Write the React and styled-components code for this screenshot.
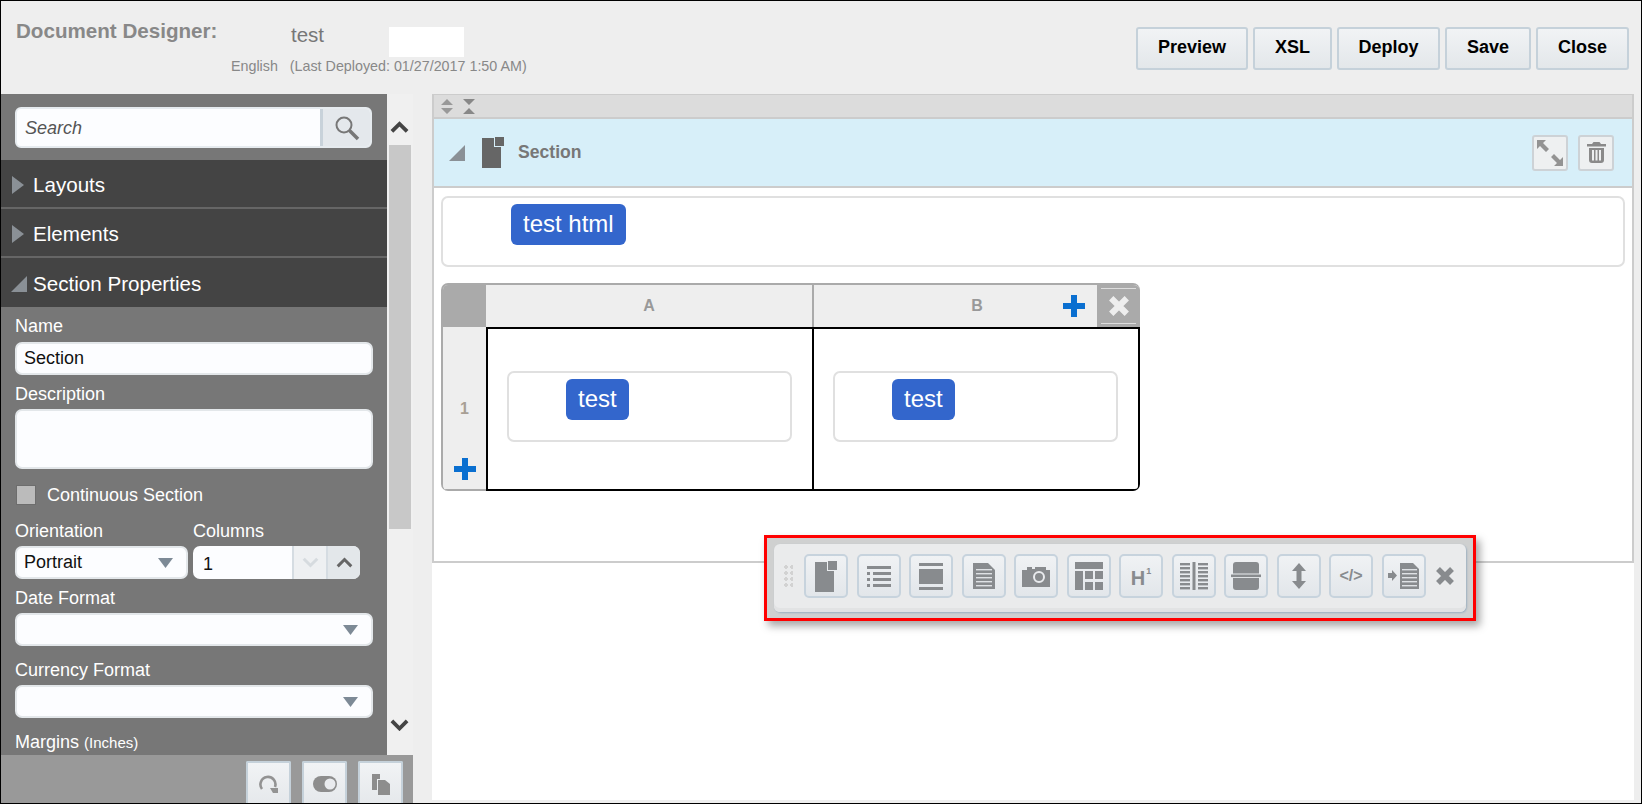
import styled, { createGlobalStyle } from 'styled-components'

const GlobalStyle = createGlobalStyle`
  html, body {
    margin: 0;
    padding: 0;
    background: #fff;
    font-family: "Liberation Sans", Arial, sans-serif;
  }
  * { box-sizing: border-box; }
`

const Frame = styled.div`
  width: 1642px;
  height: 804px;
  border: 1px solid #000;
  display: flex;
  flex-direction: column;
  overflow: hidden;
  background: #fff;
`

/* top header */
const Header = styled.header`
  height: 93px;
  flex: none;
  background: #eee;
  display: flex;
  justify-content: space-between;
  padding: 0 12px 0 15px;
`

const TitleBlock = styled.div`
  display: grid;
  grid-template-columns: 216px 60px 97px 75px;
  grid-template-rows: 55px auto;
  align-items: start;
`

const Title = styled.h1`
  margin: 18px 0 0;
  width: 201px;
  overflow: hidden;
  font-size: 20.6px;
  line-height: 24px;
  font-weight: 700;
  color: #888;
  white-space: nowrap;
`

const DocName = styled.span`
  margin: 22px 0 0 59px;
  font-size: 20.5px;
  line-height: 24px;
  color: #777;
`

const BlankField = styled.div`
  grid-column: 4;
  margin-top: 26px;
  height: 30px;
  background: #fff;
`

const Meta = styled.div`
  grid-column: 1 / -1;
  padding-left: 215px;
  margin-top: 1px;
  font-size: 14.3px;
  line-height: 18px;
  color: #888;
  white-space: pre;
`

const HeaderActions = styled.div`
  display: flex;
  gap: 5px;
  padding-top: 26px;
`

const ActionButton = styled.button`
  height: 43px;
  width: ${({ $w }) => $w}px;
  padding: 0 0 3px;
  border: 2px solid #c5d1da;
  border-radius: 3px;
  background: linear-gradient(#f1f3f5, #e3e7ea);
  font: 700 18px "Liberation Sans", Arial, sans-serif;
  color: #000;
`

const Workspace = styled.div`
  flex: 1;
  min-height: 0;
  display: flex;
`

/* left panel */
const Sidebar = styled.aside`
  width: 412px;
  flex: none;
  display: flex;
  flex-direction: column;
`

const SidebarMain = styled.div`
  flex: 1;
  min-height: 0;
  display: flex;
`

const Panel = styled.div`
  width: 386px;
  flex: none;
  display: flex;
  flex-direction: column;
  background: #777;
  overflow: hidden;
`

const SearchArea = styled.div`
  height: 66px;
  flex: none;
  padding: 13px 15px 0 14px;
  background: #777;
`

const SearchBox = styled.div`
  height: 41px;
  display: flex;
  border-radius: 6px;
  overflow: hidden;
  border: 2px solid #e6ebef;
  background: #fcfdff;
`

const SearchText = styled.span`
  flex: 1;
  padding-left: 8px;
  font-size: 18px;
  line-height: 39px;
  font-style: italic;
  color: #555;
`

const SearchButton = styled.span`
  width: 50px;
  display: flex;
  align-items: center;
  justify-content: center;
  border-left: 3px solid #c8d2da;
  background: #e4e8ec;
`

const AccordionRow = styled.div`
  height: 49px;
  flex: none;
  display: flex;
  align-items: center;
  gap: 6px;
  padding: 3px 0 0 10px;
  background: #444;
  border-bottom: 2px solid #666;
  font-size: 20.6px;
  color: #fff;
  &:nth-of-type(4) { border-bottom: 0; }
`

const Fields = styled.div`
  flex: 1;
  min-height: 0;
  padding: 9px 14px 0;
  overflow: hidden;
`

const FieldLabel = styled.div`
  font-size: 18px;
  line-height: 20px;
  color: #fff;
  margin-top: ${({ $top }) => $top || 0}px;
  margin-bottom: ${({ $gap }) => $gap || 5}px;
  small { font-size: 15px; }
`

const TextBox = styled.div`
  height: ${({ $h }) => $h || 33}px;
  border: 2px solid #e3e7ea;
  border-radius: 7px;
  background: #fcfdff;
  padding: 0 13px 0 7px;
  display: flex;
  align-items: center;
  justify-content: space-between;
  font-size: 18px;
  color: #111;
`

const CheckRow = styled.div`
  display: flex;
  align-items: center;
  gap: 12px;
  margin: 16px 0 0 2px;
  height: 20px;
  font-size: 18px;
  color: #fff;
`

const CheckBox = styled.span`
  width: 18px;
  height: 18px;
  background: #bbb;
  box-shadow: 0 0 0 1px #6d6d6d;
`

const TwoCols = styled.div`
  display: flex;
  gap: 5px;
  margin-top: 16px;
`

const Col = styled.div`
  width: ${({ $w }) => $w}px;
  flex: none;
`

const Spinner = styled.div`
  height: 33px;
  display: flex;
  border-radius: 7px;
  overflow: hidden;
  background: #fcfdff;
  font-size: 18px;
  color: #111;
`

const SpinValue = styled.span`
  width: 99px;
  padding: 3px 0 0 10px;
  line-height: 30px;
`

const SpinButton = styled.span`
  width: 34px;
  display: flex;
  align-items: center;
  justify-content: center;
  background: ${({ $off }) => ($off ? '#eef0f2' : '#e3e7ea')};
  border-left: 2px solid #d5dce2;
`

const ScrollTrack = styled.div`
  flex: 1;
  background: #f0f0f0;
  display: flex;
  flex-direction: column;
  align-items: center;
`

const ScrollArrow = styled.div`
  height: 51px;
  flex: none;
  width: 100%;
  display: flex;
  align-items: center;
  justify-content: center;
  padding: 16px 1px 0 0;
`

const ScrollThumb = styled.div`
  width: 22px;
  height: 384px;
  flex: none;
  background: #c8c8c8;
  margin-right: 1px;
`

const ScrollSpacer = styled.div`
  flex: 1;
`

const ScrollArrowBottom = styled.div`
  height: 50px;
  flex: none;
  display: flex;
  align-items: center;
  padding: 0 1px 10px 0;
`

const SidebarFooter = styled.div`
  height: 48px;
  flex: none;
  background: #999;
  display: flex;
  justify-content: flex-end;
  gap: 11px;
  padding: 6px 10px 0 0;
`

const FooterButton = styled.span`
  width: 45px;
  height: 44px;
  display: flex;
  align-items: center;
  justify-content: center;
  border: 2px solid #c5d1da;
  border-bottom: 0;
  background: linear-gradient(#f1f3f5, #e5e8eb);
  border-radius: 2px 2px 0 0;
`

const Gutter = styled.div`
  width: 19px;
  flex: none;
  background: #eee;
`

/* canvas */
const Canvas = styled.main`
  flex: 1;
  position: relative;
  min-width: 0;
  display: flex;
  flex-direction: column;
  align-items: flex-start;
  background: #fff;
  border-right: 7px solid #eee;
  border-bottom: 3px solid #eee;
`

const SectionFrame = styled.section`
  width: 1202px;
  height: 469px;
  flex: none;
  border: 2px solid #ccc;
  border-top-width: 1px;
  background: #fff;
`

const SectionTools = styled.div`
  height: 24px;
  display: flex;
  align-items: center;
  gap: 10px;
  padding-left: 7px;
  background: #dcdcdc;
  border-bottom: 2px solid #ccc;
`

const SectionBand = styled.div`
  height: 69px;
  display: flex;
  align-items: center;
  padding: 0 18px 0 15px;
  background: #d7eff9;
  border-bottom: 2px solid #ccc;
`

const BandGlyph = styled.span`
  display: flex;
  margin-left: 17px;
`

const SectionName = styled.span`
  flex: 1;
  margin-left: 14px;
  font-size: 17.6px;
  font-weight: 700;
  color: #777;
`

const BandButton = styled.span`
  width: 36px;
  height: 36px;
  margin-left: 10px;
  display: flex;
  align-items: center;
  justify-content: center;
  border: 2px solid #cdd2d6;
  border-radius: 3px;
  background: #eef0f1;
`

const SectionBody = styled.div`
  padding: 8px 7px 0;
`

const DropBox = styled.div`
  height: ${({ $h }) => $h}px;
  border: 2px solid #e0e0e0;
  border-radius: 7px;
  padding: 6px 0 0 ${({ $pad }) => $pad}px;
  background: #fff;
`

const Pill = styled.span`
  display: inline-block;
  height: 41px;
  padding: 0 12px;
  border-radius: 6px;
  background: #36c;
  color: #fff;
  font-size: 24px;
  line-height: 40px;
`

const Grid = styled.div`
  width: 699px;
  height: 208px;
  margin-top: 16px;
  display: grid;
  grid-template-columns: 43px 326px 328px;
  grid-template-rows: 42px 1fr;
  border-radius: 7px;
  overflow: hidden;
  background: #eee;
  border: 2px solid #aaa;
  border-width: 2px 0 0 2px;
`

const CornerCell = styled.div`
  background: #aaa;
`

const ColHead = styled.div`
  position: relative;
  display: flex;
  align-items: center;
  justify-content: center;
  background: #eee;
  border-left: ${({ $split }) => ($split ? '2px solid #aaa' : '0')};
  font-size: 16px;
  font-weight: 700;
  color: #999;
`

const ColTools = styled.div`
  position: absolute;
  top: 0;
  right: 0;
  height: 100%;
  display: flex;
  align-items: center;
  gap: 12px;
`

const RemoveCol = styled.span`
  position: relative;
  width: 43px;
  height: 100%;
  display: flex;
  align-items: center;
  justify-content: center;
  background: #aaa;
  &::before, &::after {
    content: '';
    position: absolute;
    left: 4px;
    right: 4px;
    height: 1px;
    background: #ddd;
  }
  &::before { top: 3px; }
  &::after { bottom: 3px; }
`

const RowHead = styled.div`
  display: flex;
  flex-direction: column;
  align-items: center;
  padding-top: 73px;
  gap: 40px;
  border-bottom: 2px solid #aaa;
  font-size: 16px;
  font-weight: 700;
  color: #a89f95;
  background: #eee;
`

const GridCell = styled.div`
  background: #fff;
  border: 2px solid #000;
  border-right-width: ${({ $first }) => ($first ? 0 : 2)}px;
  border-radius: ${({ $first }) => ($first ? '0' : '0 0 5px 0')};
  padding: 42px ${({ $first }) => ($first ? '20px 0 19px' : '20px 0 19px')};
`

/* floating palette */
const RedMark = styled.div`
  position: absolute;
  left: 332px;
  top: 441px;
  width: 712px;
  height: 86px;
  border: 3px solid #f00;
  padding: 6px 7px;
  background: #cfd0d0;
  box-shadow: 4px 5px 8px rgba(0, 0, 0, 0.35);
`

const Palette = styled.div`
  height: 68px;
  display: flex;
  align-items: center;
  padding: 0 0 4px 9px;
  border-radius: 6px;
  background: #eaebec;
  box-shadow: 1px 1px 2px #9db0c0, inset 0 -4px 0 #e2e3e4;
`

const DragDots = styled.span`
  width: 10px;
  height: 24px;
  margin-right: 11px;
  flex: none;
  background-image: radial-gradient(circle, #d2d2d2 1.7px, transparent 1.8px);
  background-size: 6px 6px;
`

const PaletteItems = styled.div`
  display: flex;
  align-items: center;
  gap: 8.5px;
`

const PaletteButton = styled.span`
  width: 44px;
  height: 44px;
  display: flex;
  align-items: center;
  justify-content: center;
  border: 2px solid #c7d3dd;
  border-radius: 5px;
  background: linear-gradient(#f0f2f4, #e2e6ea);
  color: #888b8e;
  font-weight: 700;
  sup { font-size: 9px; margin-left: 1px; vertical-align: 11px; line-height: 0; }
`

const HeadingGlyph = styled.span`
  font-size: 20px;
  margin-top: 4px;
`

const CodeGlyph = styled.span`
  font-size: 16px;
`

const PaletteClose = styled.span`
  margin-left: 10px;
  display: flex;
`

/* drawings */
const Tri = ({ open, color = '#8a9096' }) => (
  <svg width="16" height="18" viewBox="0 0 16 18">
    {open
      ? <path d="M0 17 L16 1 V17 Z" fill={color} />
      : <path d="M1 0 L13 9 L1 18 Z" fill={color} />}
  </svg>
)

const Caret = () => (
  <svg width="15" height="10" viewBox="0 0 15 10">
    <path d="M0 0 H15 L7.5 10 Z" fill="#7d8a96" />
  </svg>
)

const Chev = ({ up, color = '#444', w = 17, sw = 3.5 }) => (
  <svg width={w} height={w * 0.65} viewBox="0 0 20 13">
    <path d={up ? 'M2 11 L10 3 L18 11' : 'M2 2 L10 10 L18 2'} fill="none" stroke={color} strokeWidth={sw} />
  </svg>
)

const Plus = ({ size = 22 }) => (
  <svg width={size} height={size} viewBox="0 0 22 22">
    <path d="M8 0 H14 V8 H22 V14 H14 V22 H8 V14 H0 V8 H8 Z" fill="#0a6fd0" />
  </svg>
)

const Cross = ({ size = 18, color = '#888b8e' }) => (
  <svg width={size} height={size} viewBox="0 0 18 18">
    <path d="M2 2 L16 16 M16 2 L2 16" stroke={color} strokeWidth="5.5" />
  </svg>
)

const SectionIcon = ({ color = '#666' }) => (
  <svg width="22" height="31" viewBox="0 0 22 31">
    <path d="M0 1 H12 V10 H19 V31 H0 Z" fill={color} />
    <rect x="13" y="0" width="9" height="9" fill={color} />
  </svg>
)

const SearchIcon = () => (
  <svg width="26" height="26" viewBox="0 0 26 26">
    <circle cx="10" cy="10" r="7.5" fill="none" stroke="#777" strokeWidth="2" />
    <path d="M15.5 15.5 L24 24" stroke="#777" strokeWidth="3.5" />
  </svg>
)

const IconSvg = ({ children, w = 26, h = 28 }) => (
  <svg width={w} height={h} viewBox={`0 0 ${w} ${h}`} fill="#888b8e">{children}</svg>
)

const ListIcon = () => (
  <IconSvg h={24}>
    <rect x="1" y="2" width="24" height="3" /><rect x="1" y="8" width="3" height="3" />
    <rect x="7" y="8" width="18" height="3" /><rect x="1" y="14" width="3" height="3" />
    <rect x="7" y="14" width="18" height="3" /><rect x="1" y="20" width="3" height="3" />
    <rect x="7" y="20" width="18" height="3" />
  </IconSvg>
)

const BandIcon = () => (
  <IconSvg h={28}>
    <rect x="1" y="1" width="24" height="3" /><rect x="1" y="7" width="24" height="15" /><rect x="1" y="25" width="24" height="3" />
  </IconSvg>
)

const DocIcon = () => (
  <IconSvg w={22} h={26}>
    <path d="M0 0 H15 L22 7 V26 H0 Z" />
    {[6, 10, 14, 18, 22].map((y) => <rect key={y} x="3" y={y} width="16" height="1.4" fill="#dfe2e5" />)}
  </IconSvg>
)

const CameraIcon = () => (
  <IconSvg w={28} h={22}>
    <path d="M0 5 H5 V2 H10 V4 H13 V2 H24 V5 H28 V22 H0 Z" />
    <circle cx="17" cy="12" r="5" fill="none" stroke="#e9ebee" strokeWidth="2" />
  </IconSvg>
)

const TableIcon = () => (
  <IconSvg w={28} h={28}>
    <rect x="0" y="0" width="28" height="7" /><rect x="0" y="9" width="8" height="19" />
    <rect x="10" y="9" width="8" height="8" /><rect x="20" y="9" width="8" height="8" />
    <rect x="10" y="20" width="8" height="8" /><rect x="20" y="20" width="8" height="8" />
  </IconSvg>
)

const ColumnsIcon = () => (
  <IconSvg w={28} h={28}>
    <rect x="12.5" y="0" width="3" height="28" />
    {[1, 5, 9, 13, 17, 21, 25].map((y) => (
      <g key={y}>
        <rect x="0" y={y} width="10" height="2.4" /><rect x="18" y={y} width="10" height="2.4" />
      </g>
    ))}
  </IconSvg>
)

const SplitIcon = () => (
  <IconSvg w={30} h={28}>
    <path d="M2 3 Q2 0 5 0 H25 Q28 0 28 3 V11.6 H2 Z" /><rect x="0" y="12.5" width="30" height="2.6" />
    <path d="M2 16 H28 V25 Q28 28 25 28 H5 Q2 28 2 25 Z" />
  </IconSvg>
)

const ResizeIcon = () => (
  <IconSvg w={14} h={26}>
    <path d="M7 0 L14 8 H9.5 V18 H14 L7 26 L0 18 H4.5 V8 H0 Z" />
  </IconSvg>
)

const ImportIcon = () => (
  <IconSvg w={31} h={26}>
    <path d="M0 10 H4 V7 L9 12.5 L4 18 V15 H0 Z" />
    <path d="M12 0 H25 L31 6 V26 H12 Z" />
    {[6, 10, 14, 18, 22].map((y) => <rect key={y} x="14" y={y} width="15" height="1.4" fill="#dfe2e5" />)}
  </IconSvg>
)

const ExpandIcon = () => (
  <svg width="28" height="28" viewBox="0 0 28 28" fill="#939393">
    <path d="M1 1 H10 L7 4 L13 10 L10 13 L4 7 L1 10 Z" />
    <path d="M27 27 H18 L21 24 L15 18 L18 15 L24 21 L27 18 Z" />
  </svg>
)

const TrashIcon = () => (
  <svg width="19" height="21" viewBox="0 0 19 21" fill="#8a8a8a">
    <path d="M6.5 0 H12.5 L14 2 H19 V4.5 H0 V2 H5 Z" />
    <path d="M2 6 H17 V18 Q17 21 14 21 H5 Q2 21 2 18 Z M5 8 V18.5 H7 V8 Z M8.5 8 V18.5 H10.5 V8 Z M12 8 V18.5 H14 V8 Z" fillRule="evenodd" />
  </svg>
)

const RedoIcon = () => (
  <svg width="20" height="20" viewBox="0 0 20 20">
    <path d="M3 15 A7.5 7.5 0 1 1 16 13" fill="none" stroke="#939393" strokeWidth="2.6" />
    <path d="M11 14 H19 V19 H14 Z" fill="#939393" />
  </svg>
)

const ToggleIcon = () => (
  <svg width="24" height="16" viewBox="0 0 24 16">
    <rect x="0" y="0" width="24" height="16" rx="8" fill="#8d8d8d" />
    <circle cx="17" cy="8" r="5.5" fill="#e9ebee" />
  </svg>
)

const CopyIcon = () => (
  <svg width="18" height="21" viewBox="0 0 18 21" fill="#8d8d8d">
    <path d="M0 0 H8 V5 H5 V16 H0 Z" />
    <path d="M6 6 H13 L18 10 V21 H6 Z" />
  </svg>
)

const SortIcons = () => (
  <>
    <svg width="12" height="15" viewBox="0 0 12 15" fill="#999">
      <path d="M6 0 L12 6 H0 Z M0 9 H12 L6 15 Z" />
    </svg>
    <svg width="12" height="15" viewBox="0 0 12 15" fill="#888">
      <path d="M0 0 H12 L6 6 Z M6 9 L12 15 H0 Z" />
    </svg>
  </>
)

const PALETTE = [
  <SectionIcon key="s" color="#888b8e" />,
  <ListIcon key="l" />,
  <BandIcon key="b" />,
  <DocIcon key="d" />,
  <CameraIcon key="c" />,
  <TableIcon key="t" />,
  <HeadingGlyph key="h">H<sup>1</sup></HeadingGlyph>,
  <ColumnsIcon key="cl" />,
  <SplitIcon key="sp" />,
  <ResizeIcon key="r" />,
  <CodeGlyph key="x">&lt;/&gt;</CodeGlyph>,
  <ImportIcon key="i" />,
]

const ACTIONS = [['Preview', 112], ['XSL', 79], ['Deploy', 103], ['Save', 86], ['Close', 93]]

export default function App() {
  return (
    <>
      <GlobalStyle />
      <Frame>
        <Header>
          <TitleBlock>
            <Title>Document Designer:</Title>
            <DocName>test</DocName>
            <span />
            <BlankField />
            <Meta>English   (Last Deployed: 01/27/2017 1:50 AM)</Meta>
          </TitleBlock>
          <HeaderActions>
            {ACTIONS.map(([label, w]) => <ActionButton key={label} $w={w}>{label}</ActionButton>)}
          </HeaderActions>
        </Header>

        <Workspace>
          <Sidebar>
            <SidebarMain>
              <Panel>
                <SearchArea>
                  <SearchBox>
                    <SearchText>Search</SearchText>
                    <SearchButton><SearchIcon /></SearchButton>
                  </SearchBox>
                </SearchArea>
                <AccordionRow><Tri />Layouts</AccordionRow>
                <AccordionRow><Tri />Elements</AccordionRow>
                <AccordionRow><Tri open />Section Properties</AccordionRow>
                <Fields>
                  <FieldLabel $gap={6}>Name</FieldLabel>
                  <TextBox>Section</TextBox>
                  <FieldLabel $top={9}>Description</FieldLabel>
                  <TextBox $h={60} />
                  <CheckRow><CheckBox />Continuous Section</CheckRow>
                  <TwoCols>
                    <Col $w={173}>
                      <FieldLabel>Orientation</FieldLabel>
                      <TextBox>Portrait<Caret /></TextBox>
                    </Col>
                    <Col $w={167}>
                      <FieldLabel>Columns</FieldLabel>
                      <Spinner>
                        <SpinValue>1</SpinValue>
                        <SpinButton $off><Chev color="#d6dbdf" /></SpinButton>
                        <SpinButton><Chev up color="#666" /></SpinButton>
                      </Spinner>
                    </Col>
                  </TwoCols>
                  <FieldLabel $top={9}>Date Format</FieldLabel>
                  <TextBox><span /><Caret /></TextBox>
                  <FieldLabel $top={14}>Currency Format</FieldLabel>
                  <TextBox><span /><Caret /></TextBox>
                  <FieldLabel $top={14}>Margins <small>(Inches)</small></FieldLabel>
                </Fields>
              </Panel>
              <ScrollTrack>
                <ScrollArrow><Chev up w={19} sw={4} /></ScrollArrow>
                <ScrollThumb />
                <ScrollSpacer />
                <ScrollArrowBottom><Chev w={19} sw={4} /></ScrollArrowBottom>
              </ScrollTrack>
            </SidebarMain>
            <SidebarFooter>
              <FooterButton><RedoIcon /></FooterButton>
              <FooterButton><ToggleIcon /></FooterButton>
              <FooterButton><CopyIcon /></FooterButton>
            </SidebarFooter>
          </Sidebar>
          <Gutter />
          <Canvas>
            <SectionFrame>
              <SectionTools><SortIcons /></SectionTools>
              <SectionBand>
                <Tri open />
                <BandGlyph><SectionIcon /></BandGlyph>
                <SectionName>Section</SectionName>
                <BandButton><ExpandIcon /></BandButton>
                <BandButton><TrashIcon /></BandButton>
              </SectionBand>
              <SectionBody>
                <DropBox $h={71} $pad={68}><Pill>test html</Pill></DropBox>
                <Grid>
                  <CornerCell />
                  <ColHead>A</ColHead>
                  <ColHead $split>
                    B
                    <ColTools><Plus /><RemoveCol><Cross color="#eee" size={20} /></RemoveCol></ColTools>
                  </ColHead>
                  <RowHead>1<Plus /></RowHead>
                  <GridCell $first>
                    <DropBox $h={71} $pad={57}><Pill>test</Pill></DropBox>
                  </GridCell>
                  <GridCell>
                    <DropBox $h={71} $pad={57}><Pill>test</Pill></DropBox>
                  </GridCell>
                </Grid>
              </SectionBody>
            </SectionFrame>
            <RedMark>
              <Palette>
                <DragDots />
                <PaletteItems>
                  {PALETTE.map((icon) => <PaletteButton key={icon.key}>{icon}</PaletteButton>)}
                </PaletteItems>
                <PaletteClose><Cross /></PaletteClose>
              </Palette>
            </RedMark>
          </Canvas>
        </Workspace>
      </Frame>
    </>
  )
}
